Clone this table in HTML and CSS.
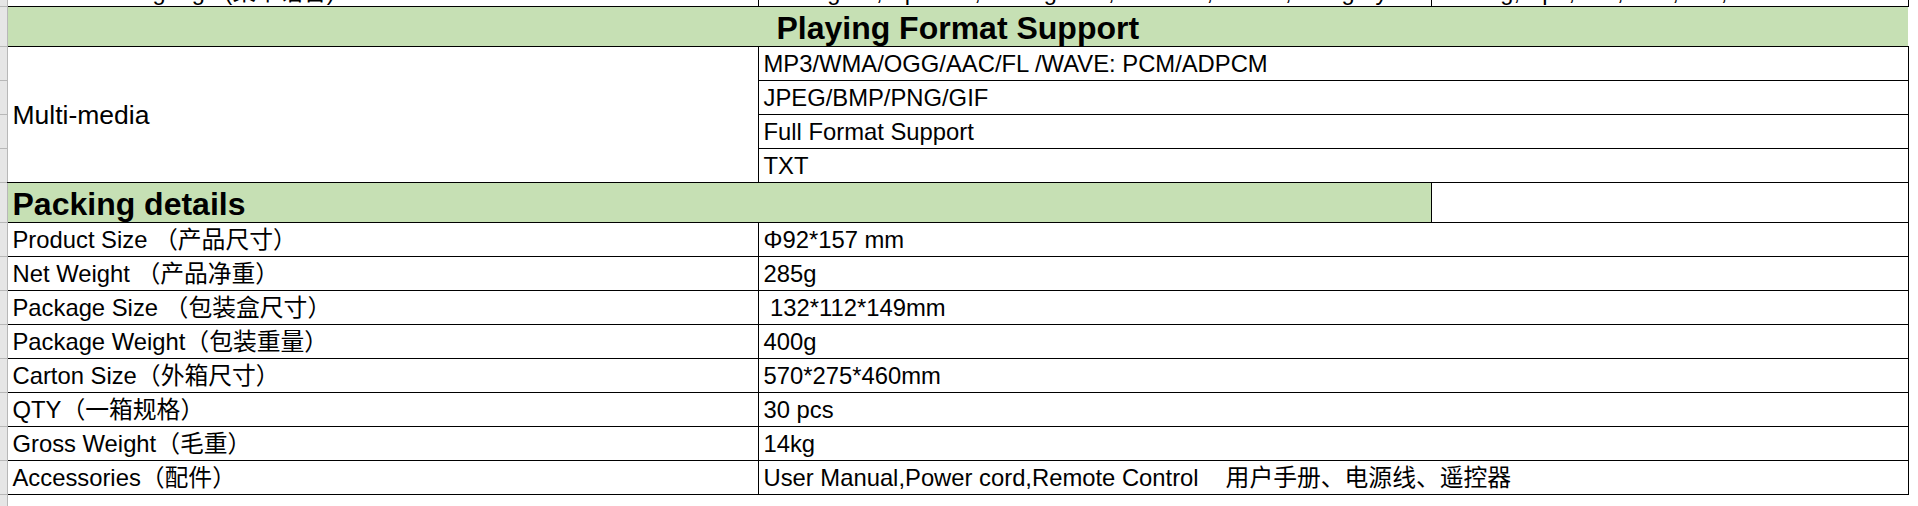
FILE: index.html
```html
<!DOCTYPE html>
<html>
<head>
<meta charset="utf-8">
<link rel="stylesheet" href="styles.css">
</head>
<body>
<table class="sheet">
  <colgroup>
    <col class="c-strip">
    <col class="c-a">
    <col class="c-b">
    <col class="c-c">
  </colgroup>
  <tr>
    <td class="strip"><div class="h-top"></div></td>
    <td class="cell"><div class="in h-top clip"><span class="clip-text">Menu Language (菜单语言)</span></div></td>
    <td class="cell"><div class="in h-top clip"><span class="clip-text">English, Spanish, Portuguese, Russian, Arabic, Hungary</span></div></td>
    <td class="cell"><div class="in h-top clip"><span class="clip-text">Eng, Spa, Por, Rus, Ara, Hun</span></div></td>
  </tr>
  <tr>
    <td class="strip"><div class="h-head"></div></td>
    <td class="head" colspan="3"><div class="in h-head center">Playing Format Support</div></td>
  </tr>
  <tr>
    <td class="strip"><div class="h-row"></div></td>
    <td class="cell mm" rowspan="4">Multi-media</td>
    <td class="cell edge" colspan="2"><div class="in h-row">MP3/WMA/OGG/AAC/FL /WAVE: PCM/ADPCM</div></td>
  </tr>
  <tr>
    <td class="strip"><div class="h-row"></div></td>
    <td class="cell edge" colspan="2"><div class="in h-row">JPEG/BMP/PNG/GIF</div></td>
  </tr>
  <tr>
    <td class="strip"><div class="h-row"></div></td>
    <td class="cell edge" colspan="2"><div class="in h-row">Full Format Support</div></td>
  </tr>
  <tr>
    <td class="strip"><div class="h-row"></div></td>
    <td class="cell edge" colspan="2"><div class="in h-row">TXT</div></td>
  </tr>
  <tr>
    <td class="strip"><div class="h-head"></div></td>
    <td class="head boxed" colspan="2"><div class="in h-head">Packing details</div></td>
    <td class="cell edge"><div class="in h-head"></div></td>
  </tr>
  <tr>
    <td class="strip"><div class="h-row"></div></td>
    <td class="cell"><div class="in h-row">Product Size （产品尺寸）</div></td>
    <td class="cell edge" colspan="2"><div class="in h-row">Φ92*157 mm</div></td>
  </tr>
  <tr>
    <td class="strip"><div class="h-row"></div></td>
    <td class="cell"><div class="in h-row">Net Weight （产品净重）</div></td>
    <td class="cell edge" colspan="2"><div class="in h-row">285g</div></td>
  </tr>
  <tr>
    <td class="strip"><div class="h-row"></div></td>
    <td class="cell"><div class="in h-row">Package Size （包装盒尺寸）</div></td>
    <td class="cell edge" colspan="2"><div class="in h-row">&nbsp;132*112*149mm</div></td>
  </tr>
  <tr>
    <td class="strip"><div class="h-row"></div></td>
    <td class="cell"><div class="in h-row">Package Weight（包装重量）</div></td>
    <td class="cell edge" colspan="2"><div class="in h-row">400g</div></td>
  </tr>
  <tr>
    <td class="strip"><div class="h-row"></div></td>
    <td class="cell"><div class="in h-row">Carton Size（外箱尺寸）</div></td>
    <td class="cell edge" colspan="2"><div class="in h-row">570*275*460mm</div></td>
  </tr>
  <tr>
    <td class="strip"><div class="h-row"></div></td>
    <td class="cell"><div class="in h-row">QTY（一箱规格）</div></td>
    <td class="cell edge" colspan="2"><div class="in h-row">30 pcs</div></td>
  </tr>
  <tr>
    <td class="strip"><div class="h-row"></div></td>
    <td class="cell"><div class="in h-row">Gross Weight（毛重）</div></td>
    <td class="cell edge" colspan="2"><div class="in h-row">14kg</div></td>
  </tr>
  <tr>
    <td class="strip"><div class="h-row"></div></td>
    <td class="cell"><div class="in h-row">Accessories（配件）</div></td>
    <td class="cell edge" colspan="2"><div class="in h-row">User Manual,Power cord,Remote Control &nbsp;&nbsp; <span class="zh">用户手册、电源线、遥控器</span></div></td>
  </tr>
  <tr>
    <td class="strip last"><div class="h-tail"></div></td>
    <td class="blank" colspan="3"><div class="h-tail"></div></td>
  </tr>
</table>
</body>
</html>
```

FILE: styles.css
```css
html, body {
  margin: 0;
  padding: 0;
  background: #ffffff;
}

body {
  font-family: "Liberation Sans", Arial, "Noto Sans CJK SC", sans-serif;
  color: #000000;
  overflow: hidden;
}

.sheet {
  border-collapse: collapse;
  table-layout: fixed;
  width: 1908px;
}

.c-strip { width: 7px; }
.c-a { width: 751px; }
.c-b { width: 673px; }
.c-c { width: 477px; }

td {
  padding: 0;
  white-space: nowrap;
  overflow: hidden;
}

.h-top { height: 6px; }
.h-head { height: 39px; }
.h-row { height: 33px; }
.h-tail { height: 12px; }

.strip {
  background: #e6e6e6;
  border-right: 1px solid #b8b8b8;
  border-bottom: 1px solid #b8b8b8;
}

.strip.last { border-bottom: none; }

.in {
  box-sizing: border-box;
  display: flex;
  align-items: flex-end;
  overflow: hidden;
}

.cell {
  font-size: 23.8px;
  border-right: 1px solid #000;
  border-bottom: 1px solid #000;
  background: #fff;
}

.cell .in {
  line-height: 27px;
  padding: 0 4px 3px 5px;
}

.zh {
  margin-left: 0.3em;
}

.cell .clip {
  padding: 0 0 0 40px;
  align-items: flex-start;
}

.clip-text {
  display: block;
  margin-top: -21px;
  line-height: 27px;
  font-size: 23.6px;
}

.mm {
  vertical-align: middle;
  font-size: 26.5px;
  line-height: 30px;
  padding: 0 4px 0 5px;
}

.head {
  background: #c6e0b4;
  font-weight: bold;
  font-size: 32px;
  border-bottom: 1px solid #000;
}

.head .in {
  line-height: 34px;
  padding: 0 0 1px 5px;
}

.head .center {
  justify-content: center;
  padding-left: 0;
}

.head.boxed {
  border-right: 1px solid #000;
}

.blank {
  background: #fff;
}
```
